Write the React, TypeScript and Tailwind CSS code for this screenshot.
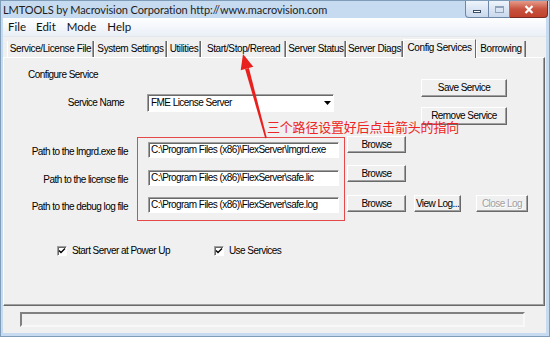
const dlg = "font-['Liberation_Sans',Arial,sans-serif] text-[10px] tracking-[-0.55px] text-black leading-[12px]";
const raised =
  "flex items-center justify-center bg-[#f0f0f0] border border-t-white border-l-white border-r-[#696969] border-b-[#696969] shadow-[inset_-1px_-1px_0_#a0a0a0]";
const sunken =
  "bg-white border border-t-[#a0a0a0] border-l-[#a0a0a0] border-r-white border-b-white shadow-[inset_1px_1px_0_#696969]";

const tabs: { label: string; w: string; active?: boolean }[] = [
  { label: 'Service/License File', w: 'w-[87px]' },
  { label: 'System Settings', w: 'w-[73px]' },
  { label: 'Utilities', w: 'w-[34px]' },
  { label: 'Start/Stop/Reread', w: 'w-[85px]' },
  { label: 'Server Status', w: 'w-[60px]' },
  { label: 'Server Diags', w: 'w-[57px]' },
  { label: 'Config Services', w: 'w-[73px]', active: true },
  { label: 'Borrowing', w: 'w-[50px]' },
];

function Button({ label, w, disabled }: { label: string; w: string; disabled?: boolean }) {
  return (
    <div className={`${raised} ${w} h-[17px] shrink-0`}>
      <span className={disabled ? 'text-[#a0a0a0] [text-shadow:1px_1px_0_#fff]' : ''}>{label}</span>
    </div>
  );
}

function PathRow({
  label,
  value,
  top,
  labelTop,
  inputTop,
  children,
}: {
  label: string;
  value: string;
  top: string;
  labelTop: string;
  inputTop: string;
  children?: React.ReactNode;
}) {
  return (
    <div className={`flex items-start ${top}`}>
      <div className={`w-[124px] text-right ${labelTop}`}>{label}</div>
      <div className={`${sunken} ml-[20px] w-[191px] h-[16px] px-[2px] flex items-center ${inputTop}`}>
        {value}
      </div>
      <div className="ml-[8px] flex items-start">{children}</div>
    </div>
  );
}

function CheckBox({ label, left }: { label: string; left: string }) {
  return (
    <div className={`flex items-center ${left}`}>
      <div className={`${sunken} w-[10px] h-[10px] flex items-center justify-center`}>
        <svg width="8" height="8" viewBox="0 0 8 8">
          <path d="M1 3.5 L3 5.5 L7 1.5" stroke="#000" strokeWidth="1.4" fill="none" />
        </svg>
      </div>
      <span className="ml-[5px]">{label}</span>
    </div>
  );
}

export default function App() {
  return (
    <div className="relative w-[550px] h-[337px] overflow-hidden bg-[#c6daf0] flex flex-col border border-[#7f9db9]">
      {/* Title bar */}
      <div className="h-[17px] flex items-start shrink-0">
        <span className="pl-[2px] pt-[1px] font-['Lato',sans-serif] text-[11px] tracking-[-0.1px] leading-[15px] text-[#1e1e1e]">
          LMTOOLS by Macrovision Corporation http://www.macrovision.com
        </span>
        <div className="ml-auto flex h-[17px] mr-[1px]">
          <div className="w-[24px] h-full rounded-bl-[4px] border border-t-0 border-[#6d87a8] bg-gradient-to-b from-[#eef4fb] to-[#c8d8ec] flex items-center justify-center">
            <div className="w-[8px] h-[3px] mt-[4px] bg-white border border-[#3b4e68]" />
          </div>
          <div className="w-[21px] h-full border border-t-0 border-l-0 border-[#6d87a8] bg-gradient-to-b from-[#eef4fb] to-[#c8d8ec] flex items-center justify-center">
            <div className="w-[9px] h-[7px] border border-[#8ea2bb] border-t-2" />
          </div>
          <div className="w-[38px] h-full rounded-br-[4px] border border-t-0 border-l-0 border-[#7a2a20] bg-gradient-to-b from-[#e59a8a] via-[#c8533f] to-[#c0412c] flex items-center justify-center">
            <svg width="10" height="9" viewBox="0 0 10 9">
              <path d="M1.5 1 L8.5 8 M8.5 1 L1.5 8" stroke="#fff" strokeWidth="2.2" />
            </svg>
          </div>
        </div>
      </div>

      {/* Client area */}
      <div className={`flex-1 ml-[2px] mr-[3px] bg-[#f0f0f0] flex flex-col ${dlg}`}>
        {/* Menu bar */}
        <div className="h-[19px] flex items-center bg-gradient-to-b from-[#fdfeff] to-[#eaeff7] border-b border-[#e3e8ef] font-['Lato',sans-serif] text-[11.5px] tracking-normal text-[#111]">
          <span className="ml-[5px]">File</span>
          <span className="ml-[10px]">Edit</span>
          <span className="ml-[11px]">Mode</span>
          <span className="ml-[11px]">Help</span>
        </div>

        {/* Tabs */}
        <div className="h-[20px] flex items-end pl-[4px] shrink-0 tracking-[-0.4px]">
          {tabs.map((t) =>
            t.active ? (
              <div
                key={t.label}
                className={`${t.w} h-[19px] -mb-[1px] z-10 bg-[#f0f0f0] border-l border-t border-r border-l-white border-t-white border-r-[#696969] flex items-center justify-center pb-[2px]`}
              >
                {t.label}
              </div>
            ) : (
              <div
                key={t.label}
                className={`${t.w} h-[16px] border-l border-r border-l-white border-r-[#696969] shadow-[inset_-1px_0_0_#a0a0a0] flex items-center justify-center`}
              >
                {t.label}
              </div>
            ),
          )}
        </div>

        {/* Tab panel */}
        <div className="h-[249px] mr-[1px] border border-t-white border-l-white border-r-[#696969] border-b-[#696969] shadow-[inset_-1px_-1px_0_#a0a0a0] flex flex-col">
          <div className="flex">
            <div className="w-[417px]">
              <div className="ml-[24px] mt-[11px]">Configure Service</div>
              <div className="flex items-center mt-[13px]">
                <div className="w-[120px] text-right">Service Name</div>
                <div className={`${sunken} ml-[23px] w-[187px] h-[18px] flex items-center pl-[3px]`}>
                  <span className="flex-1">FME License Server</span>
                  <div className="w-[12px] h-full flex items-center justify-center">
                    <svg width="7" height="4" viewBox="0 0 7 4">
                      <path d="M0 0 H7 L3.5 4 Z" fill="#000" />
                    </svg>
                  </div>
                </div>
              </div>
            </div>
            <div className="flex flex-col">
              <div className="mt-[21px]">
                <Button label="Save Service" w="w-[86px] h-[18px]" />
              </div>
              <div className="mt-[10px]">
                <Button label="Remove Service" w="w-[86px] h-[18px]" />
              </div>
            </div>
          </div>

          <PathRow
            label="Path to the lmgrd.exe file"
            value="C:\Program Files (x86)\FlexServer\lmgrd.exe"
            top="mt-[11px]"
            labelTop="mt-[10px]"
            inputTop="mt-[6px]"
          >
            <Button label="Browse" w="w-[59px]" />
          </PathRow>
          <PathRow
            label="Path to the license file"
            value="C:\Program Files (x86)\FlexServer\safe.lic"
            top="mt-[7px]"
            labelTop="mt-[9px]"
            inputTop="mt-[5px]"
          >
            <Button label="Browse" w="w-[59px]" />
          </PathRow>
          <PathRow
            label="Path to the debug log file"
            value="C:\Program Files (x86)\FlexServer\safe.log"
            top="mt-[9px]"
            labelTop="mt-[6px]"
            inputTop="mt-[2px]"
          >
            <Button label="Browse" w="w-[59px]" />
            <div className="ml-[8px]">
              <Button label="View Log..." w="w-[47px]" />
            </div>
            <div className="ml-[15px]">
              <Button label="Close Log" w="w-[52px]" disabled />
            </div>
          </PathRow>

          <div className="flex mt-[32px]">
            <CheckBox label="Start Server at Power Up" left="ml-[53px]" />
            <CheckBox label="Use Services" left="ml-[44px]" />
          </div>
        </div>

        {/* Status bar */}
        <div className="mt-[6px] ml-[17px] w-[505px] h-[15px] border-2 border-t-[#808080] border-l-[#808080] border-r-[#f8f8f8] border-b-[#f8f8f8]" />
      </div>
      <div className="h-[3px] shrink-0" />

      {/* Annotation */}
      <div className="absolute left-[136px] top-[136px] w-[208px] h-[84px] border-[1.5px] border-[#e44848] pointer-events-none" />
      <div className="absolute left-[266px] top-[118px] font-['Noto_Sans_CJK_SC',sans-serif] text-[13px] leading-[16px] text-[#ee2424] tracking-[-0.2px]">
        三个路径设置好后点击箭头的指向
      </div>
      <svg className="absolute left-0 top-0 pointer-events-none" width="550" height="337" viewBox="0 0 550 337">
        <polygon points="242,53 252.3,65.8 239.7,69.2" fill="#e8201e" />
        <polygon points="247.9,67 265.8,136.8 264.2,137.2 244.1,68" fill="#e8201e" />
      </svg>
    </div>
  );
}
